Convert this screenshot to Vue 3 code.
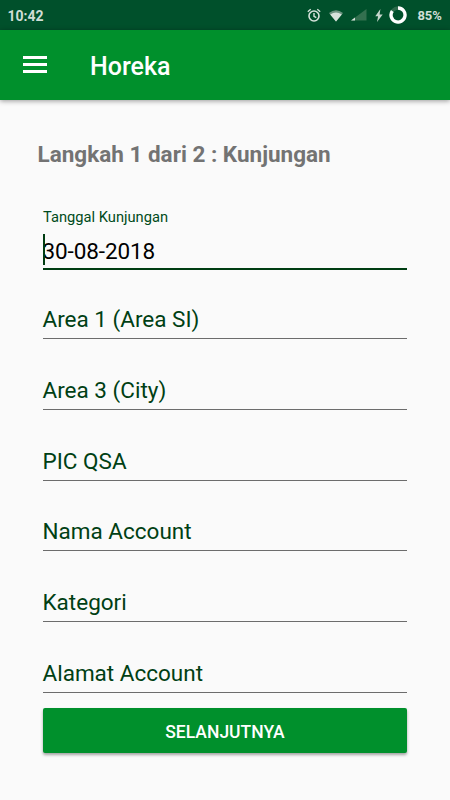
<template>
  <div class="screen">
    <div class="status-bar">
      <span class="clock">10:42</span>
      <div class="status-icons">
        <svg class="alarm" width="14" height="15" viewBox="0 0 14 15" fill="none" stroke="#d6e2db">
          <circle cx="7" cy="8" r="5" stroke-width="1.6" />
          <path d="M7 5v3.3l2.3 1.3M.8 3.7 3.7 1.3M13.2 3.7l-2.9-2.4" stroke-width="1.4" />
        </svg>
        <svg class="wifi" width="14" height="12" viewBox="0 0 14 12">
          <path d="M0 3Q7-2.4 14 3L7 11.5z" fill="#6b9480" />
          <path d="M1.2 4.4Q7 .4 12.8 4.4L7 11.5z" fill="#d6e2db" />
        </svg>
        <svg class="signal" width="16" height="12" viewBox="0 0 16 12">
          <path d="M0 11.5 15.5 0v11.5z" fill="#33704f" />
          <path d="M0 11.5 4 8.5v3z" fill="#d6e2db" />
        </svg>
        <svg class="bolt" width="8" height="13" viewBox="0 0 8 13">
          <path d="M5.4 0 .3 7.2h2.8L2 13l5.7-7.6H4.6z" fill="#c5d6cc" />
        </svg>
        <svg class="battery" width="18" height="18" viewBox="0 0 18 18" fill="none" stroke-width="3.3">
          <circle cx="9" cy="9" r="7" stroke="#2d6b4b" />
          <path d="M9 2a7 7 0 1 1-5.7 3" stroke="#fff" />
        </svg>
        <span class="percent">85%</span>
      </div>
    </div>

    <header class="toolbar">
      <button class="menu-btn" aria-label="Menu">
        <span></span>
        <span></span>
        <span></span>
      </button>
      <h1>Horeka</h1>
    </header>

    <main class="content">
      <h2>Langkah 1 dari 2 : Kunjungan</h2>

      <div class="form">
        <div class="field active">
          <div class="field-label">Tanggal Kunjungan</div>
          <div class="field-value"><span class="cursor"></span>{{ visitDate }}</div>
        </div>
        <div v-for="field in fields" :key="field" class="field">
          <span>{{ field }}</span>
        </div>
      </div>

      <button class="next-btn">SELANJUTNYA</button>
    </main>
  </div>
</template>

<script setup>
import { ref } from 'vue'

const visitDate = ref('30-08-2018')

const fields = [
  'Area 1 (Area SI)',
  'Area 3 (City)',
  'PIC QSA',
  'Nama Account',
  'Kategori',
  'Alamat Account'
]
</script>

<style>
body {
  margin: 0;
  background: #fafafa;
}
</style>

<style scoped>
.screen {
  height: 800px;
  overflow: hidden;
  background: #fafafa;
  font-family: Roboto, sans-serif;
}

.status-bar {
  display: flex;
  align-items: center;
  justify-content: space-between;
  height: 30px;
  padding: 0 8px 0 7.5px;
  box-sizing: border-box;
  background: #00502b;
  color: #d0ded6;
  font-size: 14px;
  font-weight: 700;
}

.clock {
  padding-top: 1px;
}

.status-icons {
  display: flex;
  align-items: center;
}

.wifi {
  margin-left: 8px;
  margin-top: 1px;
}

.signal {
  margin-left: 8px;
}

.bolt {
  margin-left: 8px;
}

.battery {
  margin-left: 6px;
}

.percent {
  width: 24.5px;
  margin-left: 10.5px;
  font-size: 13px;
  letter-spacing: -0.1px;
}

.toolbar {
  display: flex;
  align-items: center;
  height: 70px;
  padding-left: 23px;
  box-sizing: border-box;
  background: #00902c;
  box-shadow: 0 1px 5px rgba(0, 0, 0, 0.4);
}

.menu-btn {
  display: flex;
  flex-direction: column;
  gap: 4px;
  width: 24px;
  padding: 0;
  margin-bottom: 1px;
  border: none;
  background: none;
}

.menu-btn span {
  height: 3px;
  background: #fff;
}

.toolbar h1 {
  margin: 3px 0 0 43px;
  color: #fff;
  font-size: 25px;
  font-weight: 500;
  line-height: 30px;
}

.content {
  padding: 40px 43px 0;
}

.content h2 {
  margin: 0 0 0 -5.5px;
  color: #737373;
  font-size: 22.5px;
  font-weight: 700;
  line-height: 28px;
  white-space: nowrap;
}

.form {
  padding-top: 36px;
}

.field {
  display: flex;
  flex-direction: column;
  justify-content: flex-end;
  height: 70.75px;
  padding-bottom: 5px;
  box-sizing: border-box;
  border-bottom: 1px solid #6c6c6c;
  color: #003f14;
  font-size: 22.5px;
  line-height: 28px;
}

.field span {
  margin-left: -0.5px;
}

.field.active {
  height: 66px;
  padding-bottom: 3px;
  margin-bottom: -1.75px;
  border-bottom: 2px solid #003d12;
}

.field-label {
  color: #004a20;
  font-size: 14.7px;
  line-height: 20px;
}

.field-value {
  position: relative;
  padding-top: 10px;
  margin-left: -0.5px;
  color: #000;
  letter-spacing: -0.1px;
}

.cursor {
  position: absolute;
  top: 7px;
  left: 0.5px;
  width: 2px;
  height: 31px;
  background: #003d12;
}

.next-btn {
  display: block;
  width: 100%;
  height: 45px;
  margin-top: 15px;
  padding: 3px 0 0;
  border: none;
  border-radius: 2px;
  background: #00902c;
  box-shadow: 0 2px 3px rgba(0, 0, 0, 0.35);
  color: #fff;
  font-family: inherit;
  font-size: 17.5px;
  font-weight: 500;
}
</style>
